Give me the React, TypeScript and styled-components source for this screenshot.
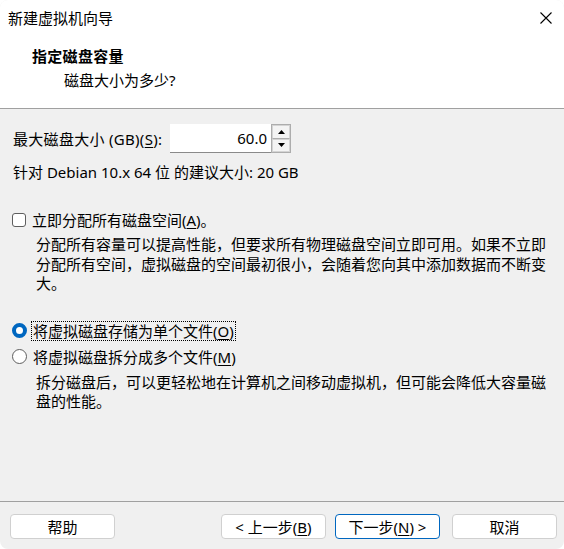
import React from 'react';
import styled, { createGlobalStyle } from 'styled-components';

const GlobalStyle = createGlobalStyle`
  html, body {
    margin: 0;
    padding: 0;
    background: #ffffff;
  }
  body {
    font-family: "Noto Sans", "Noto Sans CJK SC", sans-serif;
    font-size: 15px;
    color: #000000;
  }
  * {
    box-sizing: border-box;
  }
`;

const Window = styled.div`
  width: 564px;
  height: 549px;
  display: flex;
  flex-direction: column;
  background: #f0f0f0;
  border-radius: 8px;
  overflow: hidden;
`;

const TitleBar = styled.div`
  height: 36px;
  display: flex;
  align-items: center;
  justify-content: space-between;
  padding: 0 12px 0 8px;
  background: #ffffff;
  font-size: 15px;
  line-height: 20px;
`;

const CloseIcon = styled.svg`
  width: 12px;
  height: 12px;
  display: block;
`;

const Header = styled.div`
  height: 73px;
  background: #ffffff;
  border-bottom: 1px solid #a0a0a0;
  padding: 8px 0 0 32px;
`;

const HeaderTitle = styled.div`
  font-weight: 700;
  font-size: 15px;
  line-height: 24px;
  letter-spacing: 0.3px;
`;

const HeaderSub = styled.div`
  font-size: 15px;
  line-height: 24px;
  padding-left: 32px;
`;

const Content = styled.div`
  flex: 1;
  padding: 15px 12px 0 12px;
  display: flex;
  flex-direction: column;
`;

const SizeRow = styled.div`
  display: flex;
  align-items: center;
  height: 29px;
`;

const SizeLabel = styled.label`
  width: 158px;
  padding-left: 1px;
  line-height: 20px;
  letter-spacing: 0.3px;
  white-space: nowrap;
`;

const NumberBox = styled.div`
  display: flex;
  height: 29px;
`;

const NumberInput = styled.div`
  width: 101px;
  height: 29px;
  background: #ffffff;
  border-bottom: 1px solid #8a8a8a;
  padding-right: 4px;
  text-align: right;
  line-height: 28px;
`;

const Spinner = styled.div`
  width: 20px;
  height: 29px;
  display: flex;
  flex-direction: column;
  border: 1px solid #adadad;
  background: #ffffff;
`;

const SpinButton = styled.div<{ $top?: boolean }>`
  flex: 1;
  display: flex;
  align-items: center;
  justify-content: center;
  background: #f4f4f4;
  border: 1px solid #d4d4d4;
  ${(p) => (p.$top ? 'border-bottom-color: #adadad;' : '')}
`;

const Line = styled.div<{ $mt: number }>`
  margin-top: ${(p) => p.$mt}px;
  line-height: 20px;
  padding-left: 1px;
  white-space: nowrap;
`;

const OptionRow = styled.div<{ $mt: number }>`
  margin-top: ${(p) => p.$mt}px;
  display: flex;
  align-items: center;
  height: 20px;
`;

const CheckBox = styled.span`
  width: 14px;
  height: 14px;
  border: 1px solid #5e5e5e;
  border-radius: 3px;
  background: #ffffff;
  flex-shrink: 0;
`;

const Radio = styled.span<{ $checked?: boolean }>`
  width: 15px;
  height: 15px;
  border-radius: 50%;
  flex-shrink: 0;
  background: #ffffff;
  border: ${(p) => (p.$checked ? '4px solid #0067c0' : '1px solid #5e5e5e')};
`;

const OptionLabel = styled.span<{ $focused?: boolean }>`
  margin-left: 4px;
  padding: 0 1px;
  line-height: 18px;
  border: 1px ${(p) => (p.$focused ? 'dotted #000000' : 'solid transparent')};
`;

const Desc = styled.div<{ $mt: number }>`
  margin-top: ${(p) => p.$mt}px;
  padding-left: 24px;
`;

const DescLine = styled.div`
  line-height: 19.5px;
  white-space: nowrap;
`;

const Footer = styled.div`
  height: 48px;
  border-top: 1px solid #a0a0a0;
  padding: 12px 7px 0 10px;
  display: flex;
  align-items: flex-start;
`;

const Spacer = styled.div`
  flex: 1;
`;

const Button = styled.button<{ $default?: boolean; $ml?: number }>`
  width: 105px;
  height: 25px;
  margin-left: ${(p) => p.$ml || 0}px;
  background: #ffffff;
  border: 1px solid ${(p) => (p.$default ? '#0067c0' : '#d0d0d0')};
  border-radius: 4px;
  font-family: inherit;
  font-size: 15px;
  color: #000000;
  padding: 0;
  line-height: 22px;
`;

const Key = styled.span`
  text-decoration: underline;
  text-underline-offset: 2px;
`;

const allocateText = [
  '分配所有容量可以提高性能，但要求所有物理磁盘空间立即可用。如果不立即',
  '分配所有空间，虚拟磁盘的空间最初很小，会随着您向其中添加数据而不断变',
  '大。',
];

const splitText = [
  '拆分磁盘后，可以更轻松地在计算机之间移动虚拟机，但可能会降低大容量磁',
  '盘的性能。',
];

function Arrow({ up }: { up?: boolean }) {
  return (
    <svg width="7" height="4" viewBox="0 0 7 4">
      <polygon points={up ? '3.5,0 7,4 0,4' : '0,0 7,0 3.5,4'} fill="#000" />
    </svg>
  );
}

export default function App() {
  return (
    <>
      <GlobalStyle />
      <Window>
        <TitleBar>
          <span>新建虚拟机向导</span>
          <CloseIcon viewBox="0 0 12 12">
            <path d="M0.5 0.5 L11.5 11.5 M11.5 0.5 L0.5 11.5" stroke="#000" strokeWidth="1.1" />
          </CloseIcon>
        </TitleBar>
        <Header>
          <HeaderTitle>指定磁盘容量</HeaderTitle>
          <HeaderSub>磁盘大小为多少?</HeaderSub>
        </Header>
        <Content>
          <SizeRow>
            <SizeLabel>
              最大磁盘大小 (GB)(<Key>S</Key>):
            </SizeLabel>
            <NumberBox>
              <NumberInput>60.0</NumberInput>
              <Spinner>
                <SpinButton $top>
                  <Arrow up />
                </SpinButton>
                <SpinButton>
                  <Arrow />
                </SpinButton>
              </Spinner>
            </NumberBox>
          </SizeRow>
          <Line $mt={9}>针对 Debian 10.x 64 位 的建议大小: 20 GB</Line>

          <OptionRow $mt={28}>
            <CheckBox />
            <OptionLabel>
              立即分配所有磁盘空间(<Key>A</Key>)。
            </OptionLabel>
          </OptionRow>
          <Desc $mt={5}>
            {allocateText.map((t) => (
              <DescLine key={t}>{t}</DescLine>
            ))}
          </Desc>

          <OptionRow $mt={27}>
            <Radio $checked />
            <OptionLabel $focused>
              将虚拟磁盘存储为单个文件(<Key>O</Key>)
            </OptionLabel>
          </OptionRow>
          <OptionRow $mt={6}>
            <Radio />
            <OptionLabel>
              将虚拟磁盘拆分成多个文件(<Key>M</Key>)
            </OptionLabel>
          </OptionRow>
          <Desc $mt={6}>
            {splitText.map((t) => (
              <DescLine key={t}>{t}</DescLine>
            ))}
          </Desc>
        </Content>
        <Footer>
          <Button>帮助</Button>
          <Spacer />
          <Button>
            &lt; 上一步(<Key>B</Key>)
          </Button>
          <Button $default $ml={9}>
            下一步(<Key>N</Key>) &gt;
          </Button>
          <Button $ml={12}>取消</Button>
        </Footer>
      </Window>
    </>
  );
}
